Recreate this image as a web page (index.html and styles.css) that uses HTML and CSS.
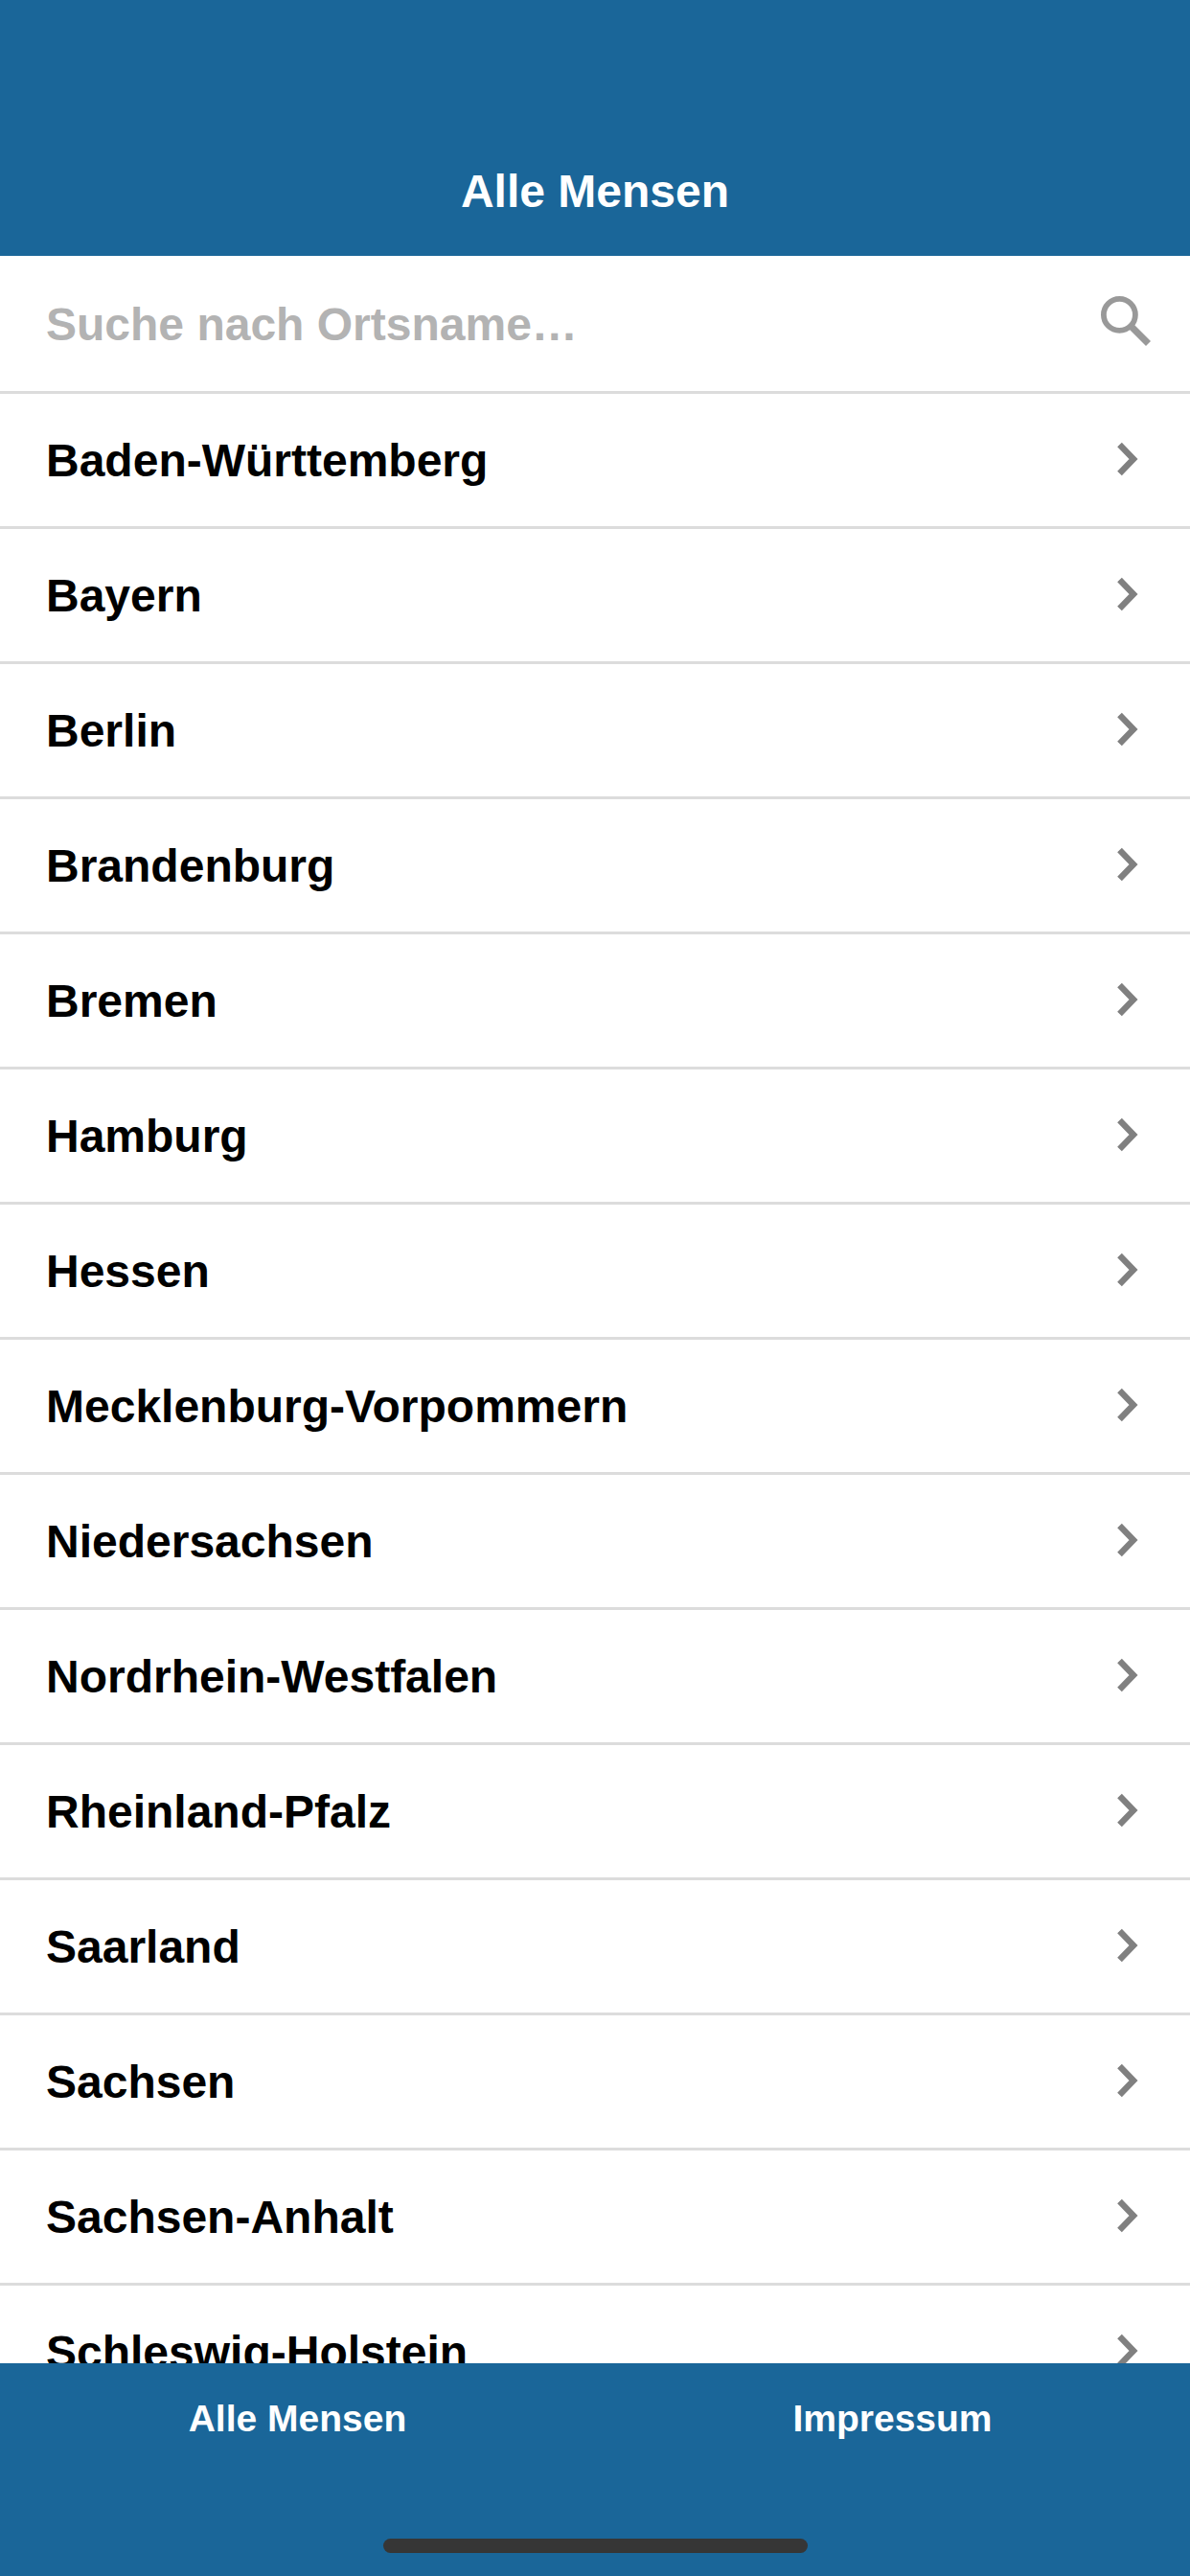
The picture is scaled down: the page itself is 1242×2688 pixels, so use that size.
FILE: index.html
```html
<!DOCTYPE html>
<html lang="de">
<head>
<meta charset="utf-8">
<title>Alle Mensen</title>
<link rel="stylesheet" href="styles.css">
</head>
<body>
<div class="app">
  <header class="nav"><h1 class="nav-title">Alle Mensen</h1></header>
  <main class="content">
    <div class="search">
      <span class="search-text">Suche nach Ortsname…</span>
      <svg class="search-icon" viewBox="0 0 52 52"><circle cx="19.4" cy="19.4" r="16.5" fill="none" stroke="#999" stroke-width="5.8"/><path d="M32 32 L49.5 49.5" fill="none" stroke="#999" stroke-width="7"/></svg>
    </div>
    <ul class="list">
      <li class="row"><span class="row-label">Baden-Württemberg</span><svg class="chev" viewBox="0 0 22 36"><path d="M2.5 3 L17 18 L2.5 33" fill="none" stroke="#808080" stroke-width="6.5"/></svg></li>
      <li class="row"><span class="row-label">Bayern</span><svg class="chev" viewBox="0 0 22 36"><path d="M2.5 3 L17 18 L2.5 33" fill="none" stroke="#808080" stroke-width="6.5"/></svg></li>
      <li class="row"><span class="row-label">Berlin</span><svg class="chev" viewBox="0 0 22 36"><path d="M2.5 3 L17 18 L2.5 33" fill="none" stroke="#808080" stroke-width="6.5"/></svg></li>
      <li class="row"><span class="row-label">Brandenburg</span><svg class="chev" viewBox="0 0 22 36"><path d="M2.5 3 L17 18 L2.5 33" fill="none" stroke="#808080" stroke-width="6.5"/></svg></li>
      <li class="row"><span class="row-label">Bremen</span><svg class="chev" viewBox="0 0 22 36"><path d="M2.5 3 L17 18 L2.5 33" fill="none" stroke="#808080" stroke-width="6.5"/></svg></li>
      <li class="row"><span class="row-label">Hamburg</span><svg class="chev" viewBox="0 0 22 36"><path d="M2.5 3 L17 18 L2.5 33" fill="none" stroke="#808080" stroke-width="6.5"/></svg></li>
      <li class="row"><span class="row-label">Hessen</span><svg class="chev" viewBox="0 0 22 36"><path d="M2.5 3 L17 18 L2.5 33" fill="none" stroke="#808080" stroke-width="6.5"/></svg></li>
      <li class="row"><span class="row-label">Mecklenburg-Vorpommern</span><svg class="chev" viewBox="0 0 22 36"><path d="M2.5 3 L17 18 L2.5 33" fill="none" stroke="#808080" stroke-width="6.5"/></svg></li>
      <li class="row"><span class="row-label">Niedersachsen</span><svg class="chev" viewBox="0 0 22 36"><path d="M2.5 3 L17 18 L2.5 33" fill="none" stroke="#808080" stroke-width="6.5"/></svg></li>
      <li class="row"><span class="row-label">Nordrhein-Westfalen</span><svg class="chev" viewBox="0 0 22 36"><path d="M2.5 3 L17 18 L2.5 33" fill="none" stroke="#808080" stroke-width="6.5"/></svg></li>
      <li class="row"><span class="row-label">Rheinland-Pfalz</span><svg class="chev" viewBox="0 0 22 36"><path d="M2.5 3 L17 18 L2.5 33" fill="none" stroke="#808080" stroke-width="6.5"/></svg></li>
      <li class="row"><span class="row-label">Saarland</span><svg class="chev" viewBox="0 0 22 36"><path d="M2.5 3 L17 18 L2.5 33" fill="none" stroke="#808080" stroke-width="6.5"/></svg></li>
      <li class="row"><span class="row-label">Sachsen</span><svg class="chev" viewBox="0 0 22 36"><path d="M2.5 3 L17 18 L2.5 33" fill="none" stroke="#808080" stroke-width="6.5"/></svg></li>
      <li class="row"><span class="row-label">Sachsen-Anhalt</span><svg class="chev" viewBox="0 0 22 36"><path d="M2.5 3 L17 18 L2.5 33" fill="none" stroke="#808080" stroke-width="6.5"/></svg></li>
      <li class="row"><span class="row-label">Schleswig-Holstein</span><svg class="chev" viewBox="0 0 22 36"><path d="M2.5 3 L17 18 L2.5 33" fill="none" stroke="#808080" stroke-width="6.5"/></svg></li>
    </ul>
  </main>
  <footer class="tabbar">
    <div class="tabs">
      <span class="tab">Alle Mensen</span>
      <span class="tab">Impressum</span>
    </div>
    <div class="home-indicator"></div>
  </footer>
</div>
</body>
</html>
```
FILE: styles.css
```css
* { box-sizing: border-box; }
html, body { margin: 0; padding: 0; }
body { font-family: "Liberation Sans", Arial, sans-serif; background: #fff; }
.app { width: 1242px; height: 2688px; display: flex; flex-direction: column; overflow: hidden; }
.nav { height: 267px; flex: none; background: #1a6699; display: flex; align-items: flex-end; justify-content: center; padding-bottom: 39px; }
.nav-title { margin: 0; font-size: 48px; line-height: 56px; font-weight: 700; color: #fff; }
.content { flex: 1; min-height: 0; overflow: hidden; }
.search { height: 144px; border-bottom: 3px solid #dcdcdc; display: flex; align-items: center; justify-content: space-between; padding: 0 41px 0 48px; }
.search-text { font-size: 48px; font-weight: 700; color: #b3b3b3; margin-top: 2px; }
.search-icon { width: 52px; height: 52px; flex: none; margin-bottom: 5px; }
.list { list-style: none; margin: 0; padding: 0; }
.row { height: 141px; border-bottom: 3px solid #dcdcdc; display: flex; align-items: center; justify-content: space-between; padding: 0 54px 0 48px; }
.row-label { font-size: 48px; font-weight: 700; color: #000; }
.chev { width: 22px; height: 36px; flex: none; margin-bottom: 2px; }
.tabbar { height: 222px; flex: none; background: #1a6699; position: relative; }
.tabs { display: grid; grid-template-columns: 1fr 1fr; padding-top: 35px; }
.tab { text-align: center; font-size: 39px; line-height: 46px; font-weight: 700; color: #fff; }
.home-indicator { position: absolute; left: 400px; top: 183px; width: 443px; height: 15px; border-radius: 8px; background: #363636; }
```
